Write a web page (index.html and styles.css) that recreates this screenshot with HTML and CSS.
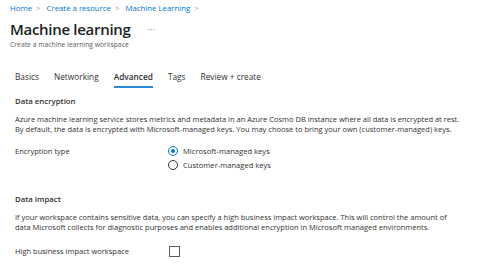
FILE: index.html
```html
<!DOCTYPE html>
<html lang="en">
<head>
    <meta charset="UTF-8">
    <title>Machine learning</title>
    <link rel="stylesheet" href="styles.css">
</head>
<body>
    <div class="header">
        <div class="breadcrumb">
            <a href="#">Home</a><span class="sep">&gt;</span>
            <a href="#">Create a resource</a><span class="sep">&gt;</span>
            <a href="#">Machine Learning</a><span class="sep">&gt;</span>
        </div>
        <div class="title-row">
            <h1>Machine learning</h1>
            <span class="more">...</span>
        </div>
        <div class="subtitle">Create a machine learning workspace</div>
    </div>

    <div class="content">
        <div class="tabs">
            <span class="tab">Basics</span>
            <span class="tab">Networking</span>
            <span class="tab active">Advanced</span>
            <span class="tab">Tags</span>
            <span class="tab">Review + create</span>
        </div>

        <h2>Data encryption</h2>
        <p>Azure machine learning service stores metrics and metadata in an Azure Cosmo DB instance where all data is encrypted at rest.<br>
        By default, the data is encrypted with Microsoft-managed keys. You may choose to bring your own (customer-managed) keys.</p>

        <div class="field">
            <div class="field-label">Encryption type</div>
            <div class="options">
                <label class="radio"><span class="dot checked"></span>Microsoft-managed keys</label>
                <label class="radio"><span class="dot"></span>Customer-managed keys</label>
            </div>
        </div>

        <h2 class="impact">Data impact</h2>
        <p>If your workspace contains sensitive data, you can specify a high business impact workspace. This will control the amount of<br>
        data Microsoft collects for diagnostic purposes and enables additional encryption in Microsoft managed environments.</p>

        <div class="field check-field">
            <div class="field-label">High business impact workspace</div>
            <span class="checkbox"></span>
        </div>
    </div>
</body>
</html>
```

FILE: styles.css
```css
body {
    margin: 0;
    padding: 0;
    font-family: "Open Sans", "Noto Sans", sans-serif;
    background: white;
    color: #323130;
    width: 480px;
    height: 273px;
    overflow: hidden;
}

.header {
    padding: 3px 0 0 10px;
}

.breadcrumb {
    font-size: 7.8px;
    line-height: 11px;
}

.breadcrumb a {
    color: #0078d4;
    text-decoration: none;
}

.breadcrumb .sep {
    color: #a19f9d;
    margin: 0 4px;
}

.title-row {
    display: flex;
    align-items: center;
    gap: 17px;
    margin-top: 4px;
}

h1 {
    margin: 0;
    font-size: 15px;
    font-weight: 600;
    letter-spacing: -0.3px;
    line-height: 22px;
    color: #201f1e;
}

.more {
    font-size: 8px;
    letter-spacing: 0.5px;
    color: #605e5c;
    margin-top: -5px;
}

.subtitle {
    font-size: 6.8px;
    line-height: 9px;
    color: #605e5c;
}

.content {
    padding: 21px 0 0 15px;
}

.tabs {
    display: flex;
    gap: 15px;
    font-size: 8.3px;
    line-height: 14px;
}

.tab {
    padding-bottom: 2px;
    border-bottom: 2px solid transparent;
}

.tab.active {
    font-weight: 600;
    border-bottom-color: #2b88d8;
}

h2 {
    margin: 7px 0 0 0;
    font-size: 7.8px;
    font-weight: 600;
    line-height: 12px;
}

p {
    margin: 7px 0 0 0;
    font-size: 7.5px;
    line-height: 10px;
    white-space: nowrap;
}

.field {
    display: flex;
    margin-top: 10px;
}

.field-label {
    width: 153px;
    font-size: 7.5px;
    line-height: 14px;
}

.options {
    display: flex;
    flex-direction: column;
}

.radio {
    display: flex;
    align-items: center;
    gap: 5px;
    font-size: 7.6px;
    line-height: 14px;
}

.dot {
    width: 8px;
    height: 8px;
    border: 1px solid #323130;
    border-radius: 50%;
    box-sizing: content-box;
    position: relative;
}

.dot.checked {
    border-color: #0078d4;
}

.dot.checked::after {
    content: "";
    position: absolute;
    left: 2px;
    top: 2px;
    width: 4px;
    height: 4px;
    border-radius: 50%;
    background: #0078d4;
}

h2.impact {
    margin-top: 21px;
}

.check-field {
    margin-top: 12px;
    align-items: center;
}

.checkbox {
    width: 9px;
    height: 9px;
    border: 1px solid #605e5c;
    margin-left: 1px;
}
```
